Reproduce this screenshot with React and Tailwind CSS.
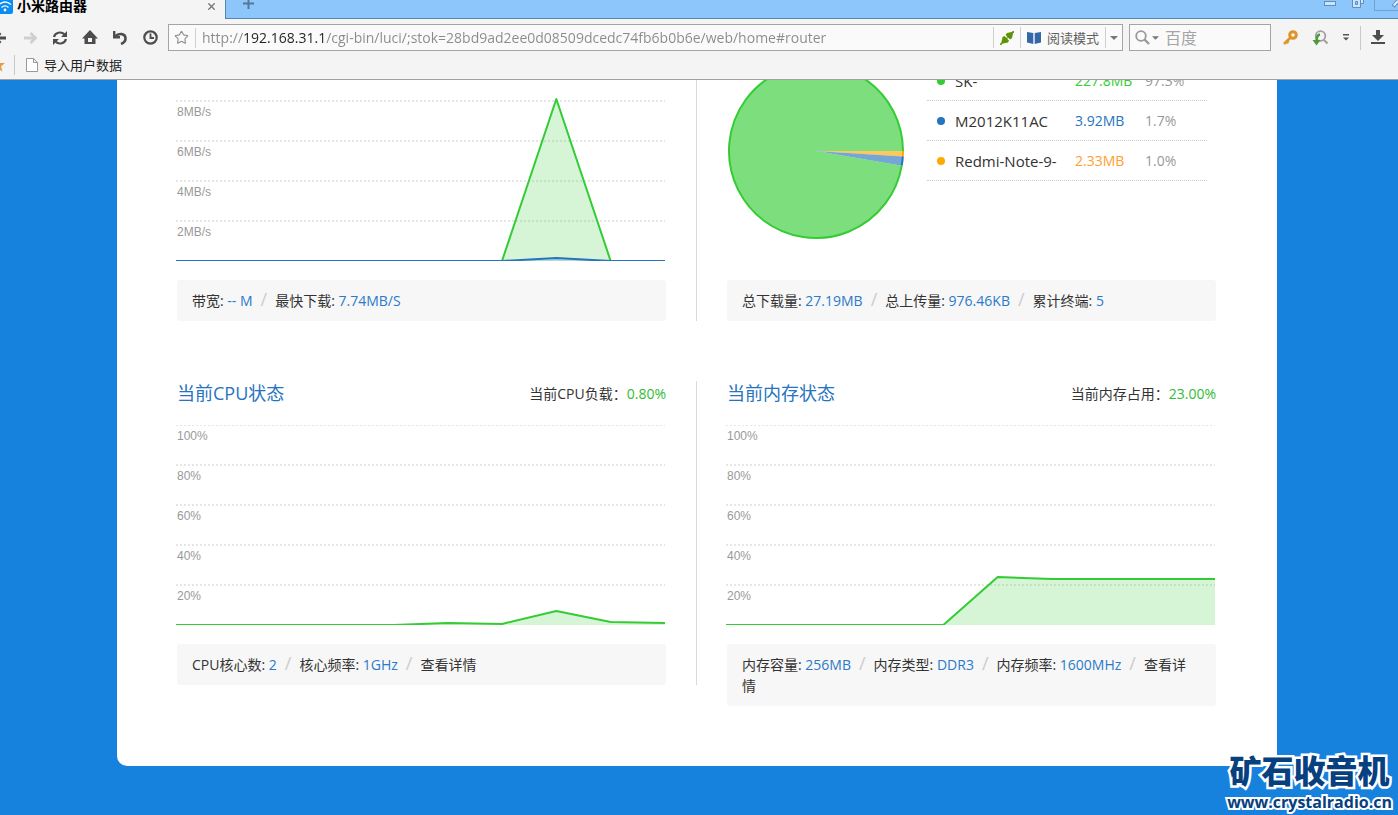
import React from 'react';
import { X, Star } from 'lucide-react';

const GREEN = '#33cc33';
const BLUE = '#2673bf';

const GRID_LINES = [0, 40, 80, 120, 160];

const PERCENT_LABELS = ['100%', '80%', '60%', '40%', '20%'];
const SPEED_LABELS = ['10MB/s', '8MB/s', '6MB/s', '4MB/s', '2MB/s'];

const devices = [
  { name: 'SK-', total: '227.8MB', percent: '97.3%', dot: 'bg-[#33cc33]', text: 'text-[#33cc33]' },
  { name: 'M2012K11AC', total: '3.92MB', percent: '1.7%', dot: 'bg-[#2673bf]', text: 'text-[#2673bf]' },
  { name: 'Redmi-Note-9-', total: '2.33MB', percent: '1.0%', dot: 'bg-[#ffa800]', text: 'text-[#ffa030]' }
];

/* ---------- Browser chrome ---------- */

function ToolButton({ label, width = 'w-[30px]', children }) {
  return (
    <button type="button" aria-label={label} className={`${width} h-7 shrink-0 flex items-center justify-center`}>
      {children}
    </button>
  );
}

function Caret({ color = '#777' }) {
  return (
    <svg width="8" height="4" viewBox="0 0 8 4">
      <path d="M0 0h8L4 4z" fill={color} />
    </svg>
  );
}

function TabStrip() {
  return (
    <div className="h-[26px] -mt-[7px] flex bg-[#8cc6fb]">
      <div className="w-[225px] shrink-0 flex items-center bg-[#f4f4f4] pr-2">
        <svg width="13" height="15" viewBox="3 0 13 15" className="shrink-0">
          <rect x="-2" y="0" width="18" height="15" rx="2" fill="#0a8cf5" />
          <g fill="none" stroke="#fff" strokeWidth="1.3">
            <path d="M2 5.5Q8 0.5 14 5.5" />
            <path d="M4.5 8.5Q8 5.3 11.5 8.5" />
          </g>
          <circle cx="8" cy="11" r="1.4" fill="#fff" />
        </svg>
        <span className="ml-1 flex-1 text-sm leading-5 font-bold text-black whitespace-nowrap">小米路由器</span>
        <button type="button" aria-label="关闭标签">
          <X size={11} strokeWidth={3} color="#777" />
        </button>
      </div>
      <div className="flex-1 flex items-center justify-between border-l border-b border-[#5585b0]">
        <button type="button" aria-label="新标签" className="ml-[17px] -mt-1">
          <svg width="11" height="11" viewBox="0 0 11 11">
            <path d="M5.5 0v11M0 5.5h11" stroke="#56779a" strokeWidth="2" />
          </svg>
        </button>
        <div className="flex items-center self-stretch">
          <button type="button" aria-label="最小化" className="w-7 -mt-1 flex justify-center">
            <svg width="12" height="5" viewBox="0 0 12 5">
              <rect x=".5" y=".5" width="11" height="4" fill="#c9e5ff" stroke="#5f90bd" />
            </svg>
          </button>
          <button type="button" aria-label="还原" className="w-7 -mt-2.5 flex justify-center">
            <svg width="12" height="14" viewBox="0 0 12 14">
              <path d="M3.5.5h8v9h-8z" fill="#c9e5ff" stroke="#5f90bd" />
              <path d="M.5 4.5h8v9h-8z" fill="#c9e5ff" stroke="#5f90bd" />
              <path d="M3.5 7.5h2v3h-2z" fill="#8cc6fb" stroke="#5f90bd" />
            </svg>
          </button>
          <button type="button" aria-label="关闭" className="ml-0.5 w-6 h-[18px] self-start flex items-end justify-end border-l border-b border-[#6aa3d6]">
            <svg width="6" height="14" viewBox="0 0 6 14">
              <path d="M1 10.500L6 5" stroke="#5f90bd" strokeWidth="4" />
              <path d="M1.700 9.500L6 5" stroke="#d8edff" strokeWidth="2" />
            </svg>
          </button>
        </div>
      </div>
    </div>
  );
}

function AddressBar() {
  return (
    <div className="ml-[3px] h-[27px] flex-1 min-w-0 flex items-center border border-[#a5a5a5] bg-[#fafafa]">
      <button type="button" aria-label="收藏" className="w-[26px] pr-0.5 shrink-0 flex justify-center">
        <Star size={15} strokeWidth={1.8} color="#909090" />
      </button>
      <span className="w-px h-5 shrink-0 bg-[#d0d0d0]"></span>
      <input
        type="text"
        aria-label="地址"
        defaultValue="http://192.168.31.1/cgi-bin/luci/;stok=28bd9ad2ee0d08509dcedc74fb6b0b6e/web/home#router"
        className="flex-1 min-w-0 ml-1.5 text-sm leading-5 outline-none text-transparent bg-clip-text bg-[linear-gradient(to_right,#8a8a8a_42px,#222_42px,#222_124px,#8a8a8a_124px)]"
      />
      <span className="w-px h-[21px] shrink-0 bg-[#d0d0d0]"></span>
      <ToolButton label="极速模式" width="w-[26px]">
        <svg width="14" height="14" viewBox="0 0 14 14">
          <path d="M0 14L14 0" stroke="#69960f" strokeWidth="1.8" />
          <path d="M1.500 11L2.500 6L4.500 5L9 9.500L8 11.500L3 12.500z" fill="#5f9208" />
          <path d="M5.500 4L7 2L11.500 1L13 2.500L12 7L10 8.500z" fill="#5f9208" />
          <path d="M4.500 4L10 9.500" stroke="#fafafa" strokeWidth=".7" />
        </svg>
      </ToolButton>
      <span className="w-px h-[21px] shrink-0 bg-[#d0d0d0]"></span>
      <button type="button" className="shrink-0 pl-1.5 pr-1.5 flex items-center gap-1.5 text-[13px] leading-5 text-[#606060]">
        <svg width="14" height="12" viewBox="0 0 14 12">
          <path d="M0 0l6.300 1v11L0 10.500zM14 0L7.700 1v11l6.300-1.500z" fill="#3566a8" />
        </svg>
        阅读模式
      </button>
      <span className="w-px h-[21px] shrink-0 bg-[#d0d0d0]"></span>
      <ToolButton label="更多模式" width="w-4">
        <Caret />
      </ToolButton>
    </div>
  );
}

function Toolbar() {
  return (
    <div className="h-[37px] flex items-center">
      <div className="-ml-[15px] flex">
        <ToolButton label="后退">
          <svg width="14" height="14" viewBox="0 0 14 14">
            <path d="M13 7H3M7.500 2L2.500 7l5 5" fill="none" stroke="#4d4d4d" strokeWidth="2.800" />
          </svg>
        </ToolButton>
        <ToolButton label="前进">
          <svg width="14" height="14" viewBox="0 0 14 14">
            <path d="M1 7h11M7.500 2l5 5-5 5" fill="none" stroke="#cfcfcf" strokeWidth="2.800" />
          </svg>
        </ToolButton>
        <ToolButton label="刷新">
          <svg width="16" height="16" viewBox="0 0 16 16">
            <g fill="none" stroke="#4d4d4d" strokeWidth="2.200">
              <path d="M2 7A6 5.500 0 0 1 12.500 4.500" />
              <path d="M14 9A6 5.500 0 0 1 3.500 11.500" />
            </g>
            <path d="M15 1v6H9zM1 15V9h6z" fill="#4d4d4d" />
          </svg>
        </ToolButton>
        <ToolButton label="主页">
          <svg width="16" height="15" viewBox="0 0 16 15">
            <path d="M8 0l8 8.500h-2.500V14H2.500V8.500H0zM6 8v4h4V8z" fill="#4d4d4d" fillRule="evenodd" />
          </svg>
        </ToolButton>
        <ToolButton label="撤销">
          <svg width="16" height="15" viewBox="0 0 16 15">
            <path d="M3 6.500C7 2.500 13.500 3.500 13.500 8.500c0 3-2 4.500-4.500 5.500" fill="none" stroke="#4d4d4d" strokeWidth="2.600" />
            <path d="M2.200 1v6.300H8" fill="none" stroke="#4d4d4d" strokeWidth="2.400" />
          </svg>
        </ToolButton>
        <ToolButton label="历史">
          <svg width="15" height="15" viewBox="0 0 15 15">
            <circle cx="7.500" cy="7.500" r="6.200" fill="none" stroke="#4d4d4d" strokeWidth="2.200" />
            <path d="M7.500 3.500V8h3.500" fill="none" stroke="#4d4d4d" strokeWidth="1.800" />
          </svg>
        </ToolButton>
      </div>

      <AddressBar />

      <div className="ml-1.5 w-[142px] h-[27px] shrink-0 flex items-center border border-[#a5a5a5] bg-[#fafafa] pl-[5px]">
        <svg width="15" height="15" viewBox="0 0 15 15" className="shrink-0">
          <circle cx="6" cy="6" r="4.800" fill="none" stroke="#999" strokeWidth="1.800" />
          <path d="M9.500 9.500l4.500 4.500" stroke="#999" strokeWidth="2.400" />
        </svg>
        <button type="button" aria-label="选择搜索引擎" className="ml-0.5 shrink-0">
          <svg width="7" height="4" viewBox="0 0 8 4">
            <path d="M0 0h8L4 4z" fill="#777" />
          </svg>
        </button>
        <input type="text" aria-label="搜索" placeholder="百度" className="ml-1.5 min-w-0 flex-1 text-base leading-5 outline-none placeholder:text-[#a5a5a5]" />
      </div>

      <div className="ml-1 flex items-center">
        <ToolButton label="密码">
          <svg width="15" height="15" viewBox="0 0 15 15">
            <path d="M7.500 7.500L1 14M3.500 11l2 2" stroke="#dc9528" strokeWidth="2.600" />
            <circle cx="10" cy="5" r="3.300" fill="none" stroke="#dc9528" strokeWidth="3" />
          </svg>
        </ToolButton>
        <ToolButton label="查找">
          <svg width="17" height="16" viewBox="0 0 17 16">
            <circle cx="8.500" cy="6" r="4.800" fill="none" stroke="#a0a0a0" strokeWidth="1.800" />
            <path d="M11.500 9.500l4 4" stroke="#a0a0a0" strokeWidth="2.200" />
            <path d="M8 4.500C5.500 5 4.500 7 4.500 11" fill="none" stroke="#4c9a36" strokeWidth="2.400" />
            <path d="M.5 10h8l-4 5.500z" fill="#4c9a36" />
          </svg>
        </ToolButton>
        <ToolButton label="更多" width="w-[22px]">
          <svg width="6" height="7" viewBox="0 0 6 7">
            <path d="M0 0h6v1.500H0zM0 3.500h6L3 6.500z" fill="#555" />
          </svg>
        </ToolButton>
        <span className="ml-[3px] w-px h-6 bg-[#c8c8c8]"></span>
        <ToolButton label="下载" width="w-[37px]">
          <svg width="18" height="15" viewBox="0 0 18 15">
            <path d="M5 0h4v5h4l-6 6-6-6h4zM0 12h14v2H0z" fill="#4d4d4d" />
          </svg>
        </ToolButton>
      </div>
    </div>
  );
}

function BookmarkBar() {
  return (
    <div className="h-[23px] pb-1.5 flex items-center">
      <svg width="5" height="14" viewBox="7 0 5 14" className="shrink-0">
        <path d="M5 0l2 5h5l-4 3.500 1.500 5L5 11z" fill="#e0a040" />
      </svg>
      <span className="ml-[9px] w-px h-5 bg-[#c8c8c8]"></span>
      <a href="#import" className="ml-[11px] flex items-center gap-1.5 text-[13px] leading-5 text-[#222]">
        <svg width="12" height="14" viewBox="0 0 12 14">
          <path d="M.5.5h7l4 4v9H.5zM7.500.5v4h4" fill="#fff" stroke="#999" />
        </svg>
        导入用户数据
      </a>
    </div>
  );
}

/* ---------- Router status ---------- */

function AreaChart({ labels, series }) {
  return (
    <div className="grid h-[200px] -ml-px mr-px">
      <svg className="col-start-1 row-start-1 w-full h-[200px]" viewBox="0 0 489 200" preserveAspectRatio="none">
        {GRID_LINES.map(y => (
          <line key={y} x1="0" x2="489" y1={y} y2={y} stroke="#e6e6e6" strokeWidth="2" strokeDasharray="2 2" />
        ))}
        {series.map(s => {
          const points = s.values.map((v, i) => `${(i * 489) / (s.values.length - 1)},${200 - v}`).join(' ');
          return (
            <g key={s.color}>
              <polygon points={`0,200 ${points} 489,200`} fill={s.color} fillOpacity="0.2" />
              <polyline points={points} fill="none" stroke={s.color} strokeWidth="2" strokeLinejoin="round" />
            </g>
          );
        })}
      </svg>
      <div className="col-start-1 row-start-1 pl-px">
        {labels.map(label => (
          <div key={label} className="h-10 pt-px font-['Liberation_Sans',Arial,sans-serif] text-xs leading-5 text-[#999]">
            {label}
          </div>
        ))}
      </div>
    </div>
  );
}

function PieChart() {
  const point = deg => {
    const a = (deg * Math.PI) / 180;
    return `${90 + 87 * Math.cos(a)} ${90 + 87 * Math.sin(a)}`;
  };
  const slices = [
    { from: 0, to: 3.6, color: '#ffa800' },
    { from: 3.6, to: 9.7, color: BLUE },
    { from: 9.7, to: 360, color: GREEN }
  ];

  return (
    <svg width="180" height="180" viewBox="0 0 180 180" className="shrink-0 -ml-px">
      {slices.map(s => {
        const arc = `${point(s.from)} A87 87 0 ${s.to - s.from > 180 ? 1 : 0} 1 ${point(s.to)}`;
        return (
          <g key={s.color}>
            <path d={`M90 90 L${arc} Z`} fill={s.color} fillOpacity="0.64" />
            <path d={`M${arc}`} fill="none" stroke={s.color} strokeWidth="2" />
          </g>
        );
      })}
    </svg>
  );
}

function InfoBar({ items }) {
  return (
    <div className="mt-[19px] pl-[15px] pr-5 py-2.5 rounded-[3px] bg-[#f7f7f7] text-sm leading-[21px] text-[#333]">
      {items.map((item, i) => (
        <React.Fragment key={item.label}>
          {i > 0 && <span className="mx-2 text-lg leading-4 text-[#ccc]">/</span>}
          {item.href ? (
            <a href={item.href}>{item.label}</a>
          ) : (
            <>
              {item.label}: <span className="text-[#2a7acb]">{item.value}</span>
            </>
          )}
        </React.Fragment>
      ))}
    </div>
  );
}

function PanelTitle({ title, label, value }) {
  return (
    <div className="h-11 flex items-start justify-between">
      <h2 className="text-lg leading-6 text-[#2673bf]">{title}</h2>
      <p className="text-sm leading-[26px] text-[#333]">
        {label}：<span className="text-[#33bb33]">{value}</span>
      </p>
    </div>
  );
}

export default function App() {
  return (
    <div className="relative h-screen overflow-hidden flex flex-col bg-[#1782de] font-['Open_Sans','Noto_Sans_CJK_SC',sans-serif]">
      <header className="shrink-0 bg-[#f4f4f4] border-b border-[#a0a0a0]">
        <TabStrip />
        <Toolbar />
        <BookmarkBar />
      </header>

      <main className="flex-1 min-h-0 overflow-hidden pl-[117px] pr-[121px]">
        <div className="-mt-[19px] pl-[60px] pr-[61px] pb-[60px] bg-white rounded-b-[10px] flex flex-col gap-[60px]">
          <div className="flex items-start">
            <section className="flex-1 min-w-0 pr-[30px] border-r border-[#d9d9d9]">
              <AreaChart
                labels={SPEED_LABELS}
                series={[
                  { color: GREEN, values: [0, 0, 0, 0, 0, 0, 0, 162, 0, 0] },
                  { color: BLUE, values: [0, 0, 0, 0, 0, 0, 0, 3, 0, 0] }
                ]}
              />
              <InfoBar items={[{ label: '带宽', value: '-- M' }, { label: '最快下载', value: '7.74MB/S' }]} />
            </section>
            <section className="flex-1 min-w-0 pl-[30px]">
              <div className="h-[200px] flex">
                <PieChart />
                <ul className="ml-[21px] w-[280px] text-sm">
                  {devices.map(d => (
                    <li key={d.name} className="h-10 pl-2.5 flex items-center border-b border-dotted border-[#ccc]">
                      <span className={`w-2 h-2 rounded-full ${d.dot}`}></span>
                      <span className="ml-2.5 w-[120px] text-[15px] leading-5 text-[#333]">{d.name}</span>
                      <span className={`w-[70px] ${d.text}`}>{d.total}</span>
                      <span className="text-[#999]">{d.percent}</span>
                    </li>
                  ))}
                </ul>
              </div>
              <InfoBar
                items={[
                  { label: '总下载量', value: '27.19MB' },
                  { label: '总上传量', value: '976.46KB' },
                  { label: '累计终端', value: '5' }
                ]}
              />
            </section>
          </div>

          <div className="flex items-start">
            <section className="flex-1 min-w-0 pr-[30px] border-r border-[#d9d9d9]">
              <PanelTitle title="当前CPU状态" label="当前CPU负载" value="0.80%" />
              <AreaChart labels={PERCENT_LABELS} series={[{ color: GREEN, values: [0, 0, 0, 0, 0, 2, 1, 14, 3, 2] }]} />
              <InfoBar
                items={[
                  { label: 'CPU核心数', value: '2' },
                  { label: '核心频率', value: '1GHz' },
                  { label: '查看详情', href: '#cpu' }
                ]}
              />
            </section>
            <section className="flex-1 min-w-0 pl-[30px]">
              <PanelTitle title="当前内存状态" label="当前内存占用" value="23.00%" />
              <AreaChart labels={PERCENT_LABELS} series={[{ color: GREEN, values: [0, 0, 0, 0, 0, 48, 46, 46, 46, 46] }]} />
              <InfoBar
                items={[
                  { label: '内存容量', value: '256MB' },
                  { label: '内存类型', value: 'DDR3' },
                  { label: '内存频率', value: '1600MHz' },
                  { label: '查看详情', href: '#memory' }
                ]}
              />
            </section>
          </div>
        </div>
      </main>

      {/* Site watermark over the page corner */}
      <div className="absolute right-1.5 bottom-1 text-center text-[#07407f] whitespace-nowrap">
        <div className="text-[32px] leading-[44px] font-black [-webkit-text-stroke:5px_#fff] [paint-order:stroke_fill]">矿石收音机</div>
        <div className="text-base leading-[18px] font-bold [-webkit-text-stroke:4px_#fff] [paint-order:stroke_fill]">www.crystalradio.cn</div>
      </div>
    </div>
  );
}
